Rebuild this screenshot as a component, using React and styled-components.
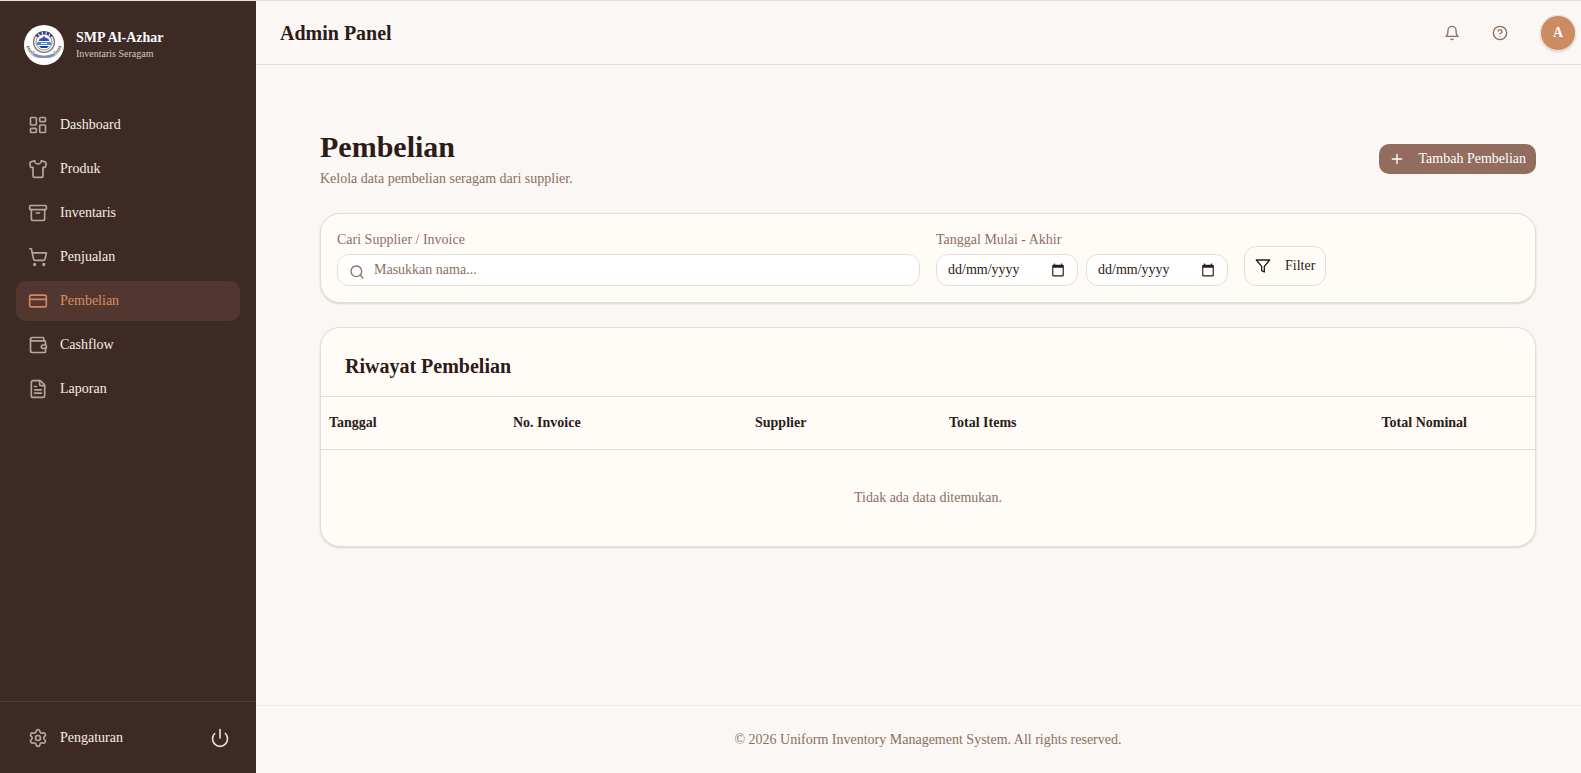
import React from 'react';
import styled, { createGlobalStyle } from 'styled-components';
import {
  LayoutDashboard,
  Shirt,
  Archive,
  ShoppingCart,
  CreditCard,
  Wallet,
  FileText,
  Settings,
  Power,
  CircleHelp,
  Plus,
  Search,
} from 'lucide-react';

const GlobalStyle = createGlobalStyle`
  * {
    box-sizing: border-box;
  }

  body {
    margin: 0;
    background: #fbf7f4;
    color: #2d1b18;
    font-family: 'Liberation Serif', 'Times New Roman', serif;
    font-size: 14px;
    line-height: 20px;
    overflow: hidden;
  }

  button,
  input {
    font: inherit;
  }
`;

const Page = styled.div`
  display: flex;
  min-height: calc(100vh + 1px);
  border-top: 1px solid #e7e2dd;
`;

const Sidebar = styled.aside`
  width: 256px;
  flex-shrink: 0;
  display: flex;
  flex-direction: column;
  background: #3e2a25;
`;

const Brand = styled.div`
  display: flex;
  align-items: center;
  gap: 12px;
  padding: 24px;
`;

const BrandName = styled.div`
  color: #ffffff;
  font-weight: bold;
  line-height: 18px;
`;

const BrandSub = styled.div`
  color: #d1c7c2;
  font-size: 10px;
  line-height: 14px;
`;

const Nav = styled.nav`
  flex: 1;
  display: flex;
  flex-direction: column;
  gap: 4px;
  padding: 16px;
`;

const NavLink = styled.a`
  display: flex;
  align-items: center;
  gap: 12px;
  height: 40px;
  padding: 0 12px;
  border-radius: 10px;
  background: ${(props) => (props.$active ? '#523730' : 'transparent')};
  color: ${(props) => (props.$active ? '#d98f5c' : '#f5ece7')};
  text-decoration: none;

  svg {
    color: ${(props) => (props.$active ? '#cd8763' : '#b5a69c')};
  }
`;

const SidebarFooter = styled.div`
  display: flex;
  align-items: center;
  justify-content: space-between;
  padding: 16px;
  border-top: 1px solid #503a34;
`;

const LogoutButton = styled.button`
  display: flex;
  padding: 10px;
  border: none;
  background: none;
  color: #e6dcd5;
`;

const Main = styled.div`
  flex: 1;
  min-width: 0;
  display: flex;
  flex-direction: column;
`;

const Topbar = styled.header`
  display: flex;
  align-items: center;
  justify-content: space-between;
  height: 64px;
  padding: 0 5px 0 24px;
  border-bottom: 1px solid #e5dfda;
`;

const TopbarTitle = styled.div`
  font-size: 20px;
  font-weight: bold;
  line-height: 28px;
`;

const TopbarActions = styled.div`
  display: flex;
  align-items: center;
  gap: 16px;
`;

const IconButton = styled.button`
  display: flex;
  padding: 8px;
  border: none;
  background: none;
  color: #8d6e63;
`;

const Avatar = styled.button`
  width: 36px;
  height: 36px;
  margin-left: 8px;
  padding: 0;
  border: 1px solid #f0e4dc;
  border-radius: 50%;
  background: #cb8c62;
  color: #ffffff;
  font-weight: bold;
  box-shadow: 0 1px 2px rgba(0, 0, 0, 0.15);
`;

const Content = styled.main`
  flex: 1;
  display: flex;
  flex-direction: column;
  gap: 24px;
  padding: 64px 45px 64px 64px;
`;

const PageHeader = styled.div`
  display: flex;
  align-items: center;
  justify-content: space-between;
`;

const PageTitle = styled.h1`
  margin: 0 0 4px;
  font-size: 30px;
  line-height: 36px;
`;

const PageSub = styled.p`
  margin: 0;
  color: #8d6e63;
`;

const AddButton = styled.button`
  display: flex;
  align-items: center;
  gap: 14px;
  height: 30px;
  padding: 0 10px;
  border: none;
  border-radius: 10px;
  background: #916c5f;
  color: #ffffff;
`;

const Card = styled.section`
  border: 1px solid #e8dcd2;
  border-radius: 20px;
  background: #fffcf7;
  box-shadow: 0 1px 2px rgba(62, 42, 37, 0.18);
  overflow: hidden;
`;

const FilterGrid = styled.form`
  display: grid;
  grid-template-columns: 1fr 1fr;
  gap: 16px;
  padding: 16px;
`;

const FilterGroup = styled.div`
  display: flex;
  align-items: flex-end;
  gap: 16px;
`;

const Label = styled.label`
  display: block;
  margin-bottom: 4px;
  color: #8d6e63;
`;

const SearchBox = styled.div`
  position: relative;

  svg {
    position: absolute;
    top: 10px;
    left: 12px;
    color: #8d6e63;
  }
`;

const Input = styled.input`
  display: block;
  width: 100%;
  height: 32px;
  padding: 0 11px;
  border: 1px solid #e8dcd2;
  border-radius: 12px;
  background: #ffffff;
  color: #2d1b18;

  &::placeholder {
    color: #2d1b18;
  }
`;

const SearchInput = styled(Input)`
  padding-left: 36px;

  &::placeholder {
    color: #8d6e63;
  }
`;

const DateRow = styled.div`
  display: flex;
  gap: 8px;
`;

const DateBox = styled.div`
  position: relative;
  width: 142px;

  svg {
    position: absolute;
    top: 9px;
    right: 13px;
  }
`;

const FilterButton = styled.button`
  display: flex;
  align-items: center;
  gap: 14px;
  height: 40px;
  padding: 0 10px;
  border: 1px solid #e8dcd2;
  border-radius: 12px;
  background: #fffcf7;
  color: #2d1b18;
`;

const CardTitle = styled.h2`
  margin: 0;
  padding: 24px 24px 16px;
  border-bottom: 1px solid #e8dcd2;
  font-size: 20px;
  line-height: 28px;
`;

const Table = styled.table`
  width: 100%;
  border-collapse: separate;
  border-spacing: 0;
  table-layout: fixed;
`;

const Th = styled.th`
  width: ${(props) => props.$width || 'auto'};
  height: 53px;
  padding: 0 8px;
  border-bottom: 1px solid #e8dcd2;
  text-align: ${(props) => props.$align || 'left'};
`;

const EmptyCell = styled.td`
  height: 96px;
  padding: 0 8px;
  color: #8d6e63;
  text-align: center;
`;

const Footer = styled.footer`
  padding: 24px 45px 24px 64px;
  border-top: 1px solid #f0eae6;
  color: #8d6e63;
  text-align: center;
`;

const menu = [
  { label: 'Dashboard', icon: LayoutDashboard },
  { label: 'Produk', icon: Shirt },
  { label: 'Inventaris', icon: Archive },
  { label: 'Penjualan', icon: ShoppingCart },
  { label: 'Pembelian', icon: CreditCard, active: true },
  { label: 'Cashflow', icon: Wallet },
  { label: 'Laporan', icon: FileText },
];

const columns = [
  { label: 'Tanggal', width: '184px' },
  { label: 'No. Invoice', width: '242px' },
  { label: 'Supplier', width: '194px' },
  { label: 'Total Items' },
  { label: 'Total Nominal', align: 'right' },
  { label: '', width: '60px' },
];

const Logo = () => (
  <svg width="40" height="40" viewBox="0 0 40 40" aria-hidden="true">
    <circle cx="20" cy="20" r="20" fill="#ffffff" />
    <circle cx="20" cy="17" r="10.5" fill="#f1f0ee" stroke="#77736c" strokeWidth="1.2" />
    <circle cx="20" cy="17" r="8" fill="#ffffff" stroke="#a09c94" strokeWidth="1" />
    <path d="M12.500 11.500a9.500 9.500 0 0 1 15 0" fill="none" stroke="#2f3a9c" strokeWidth="3" strokeDasharray="2.4 1.4" />
    <path d="M14.500 16q1-3 3.500-3l2-2 2 2q2.500 0 3.500 3z" fill="#3c4fae" />
    <path d="M13 17h14v3H13z" fill="#3f8fd2" />
    <path d="M15 21h10l-2 2h-6z" fill="#2f3a9c" />
    <path d="M17 18.500h6" stroke="#ffffff" strokeWidth="1" />
    <path d="M4 21q1 6 6 7M36 21q-1 6-6 7" fill="none" stroke="#8b8470" strokeWidth="3" strokeDasharray="1.500 .6" />
    <path d="M5 26q3 6 9 7h12q6-1 9-7l-5 2q-10 5-20 0z" fill="#b8b4b4" />
    <path d="M10 29.500q10 5 20 0" fill="none" stroke="#7b86d6" strokeWidth="2" />
  </svg>
);

const BellIcon = () => (
  <svg width="16" height="16" viewBox="0 0 24 24" fill="none" stroke="currentColor" strokeWidth="2" strokeLinecap="round" strokeLinejoin="round" aria-hidden="true">
    <path d="M6 8a6 6 0 0 1 12 0c0 7 3 9 3 9H3s3-2 3-9" />
    <path d="M10.300 21a1.940 1.940 0 0 0 3.400 0" />
  </svg>
);

const FunnelIcon = () => (
  <svg width="16" height="16" viewBox="0 0 24 24" fill="none" stroke="currentColor" strokeWidth="2" strokeLinecap="round" strokeLinejoin="round" aria-hidden="true">
    <path d="M22 3H2l8 9.460V19l4 2v-8.540z" />
  </svg>
);

const CalendarIcon = () => (
  <svg width="14" height="14" viewBox="0 0 24 24" fill="currentColor" aria-hidden="true">
    <path d="M20 3h-1V1h-2v2H7V1H5v2H4c-1.100 0-2 .9-2 2v16c0 1.100.9 2 2 2h16c1.100 0 2-.9 2-2V5c0-1.100-.9-2-2-2zm0 18H4V8h16v13z" />
  </svg>
);

const DateField = (props) => (
  <DateBox>
    <Input type="text" inputMode="numeric" placeholder="dd/mm/yyyy" {...props} />
    <CalendarIcon />
  </DateBox>
);

const App = () => {
  return (
    <>
      <GlobalStyle />
      <Page>
        <Sidebar>
          <Brand>
            <Logo />
            <div>
              <BrandName>SMP Al-Azhar</BrandName>
              <BrandSub>Inventaris Seragam</BrandSub>
            </div>
          </Brand>
          <Nav>
            {menu.map(({ label, icon: Icon, active }) => (
              <NavLink key={label} href="#" $active={active}>
                <Icon size={20} />
                {label}
              </NavLink>
            ))}
          </Nav>
          <SidebarFooter>
            <NavLink href="#">
              <Settings size={20} />
              Pengaturan
            </NavLink>
            <LogoutButton aria-label="Keluar">
              <Power size={20} />
            </LogoutButton>
          </SidebarFooter>
        </Sidebar>
        <Main>
          <Topbar>
            <TopbarTitle>Admin Panel</TopbarTitle>
            <TopbarActions>
              <IconButton aria-label="Notifikasi">
                <BellIcon />
              </IconButton>
              <IconButton aria-label="Bantuan">
                <CircleHelp size={16} />
              </IconButton>
              <Avatar>A</Avatar>
            </TopbarActions>
          </Topbar>
          <Content>
            <PageHeader>
              <div>
                <PageTitle>Pembelian</PageTitle>
                <PageSub>Kelola data pembelian seragam dari supplier.</PageSub>
              </div>
              <AddButton>
                <Plus size={16} />
                Tambah Pembelian
              </AddButton>
            </PageHeader>
            <Card>
              <FilterGrid>
                <div>
                  <Label htmlFor="search">Cari Supplier / Invoice</Label>
                  <SearchBox>
                    <Search size={16} />
                    <SearchInput id="search" type="text" placeholder="Masukkan nama..." />
                  </SearchBox>
                </div>
                <FilterGroup>
                  <div>
                    <Label htmlFor="start">Tanggal Mulai - Akhir</Label>
                    <DateRow>
                      <DateField id="start" />
                      <DateField aria-label="Tanggal akhir" />
                    </DateRow>
                  </div>
                  <FilterButton type="button">
                    <FunnelIcon />
                    Filter
                  </FilterButton>
                </FilterGroup>
              </FilterGrid>
            </Card>
            <Card>
              <CardTitle>Riwayat Pembelian</CardTitle>
              <Table>
                <thead>
                  <tr>
                    {columns.map((col, i) => (
                      <Th key={i} $width={col.width} $align={col.align}>{col.label}</Th>
                    ))}
                  </tr>
                </thead>
                <tbody>
                  <tr>
                    <EmptyCell colSpan={columns.length}>Tidak ada data ditemukan.</EmptyCell>
                  </tr>
                </tbody>
              </Table>
            </Card>
          </Content>
          <Footer>© 2026 Uniform Inventory Management System. All rights reserved.</Footer>
        </Main>
      </Page>
    </>
  );
};

export default App;
